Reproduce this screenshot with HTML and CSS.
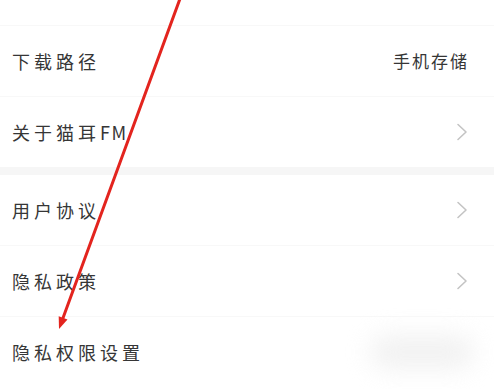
FILE: index.html
```html
<!DOCTYPE html>
<html lang="zh-CN">
<head>
<meta charset="utf-8">
<title>设置</title>
<link rel="stylesheet" href="styles.css">
</head>
<body>
<div class="page">
  <ul class="list">
    <li class="row row-top"><span class="label">清除缓存</span><span class="value">23.68MB</span></li>
    <li class="row"><span class="label">下载路径</span><span class="value">手机存储</span></li>
    <li class="row row-last"><span class="label">关于猫耳<span class="latin">FM</span></span>
      <svg class="chev" viewBox="0 0 12 18" width="12" height="18"><path d="M2 1.5 L10 9 L2 16.5" fill="none" stroke="#c4c4c4" stroke-width="1.6" stroke-linecap="round" stroke-linejoin="round"/></svg>
    </li>
  </ul>
  <div class="band"></div>
  <ul class="list">
    <li class="row"><span class="label">用户协议</span>
      <svg class="chev" viewBox="0 0 12 18" width="12" height="18"><path d="M2 1.5 L10 9 L2 16.5" fill="none" stroke="#c4c4c4" stroke-width="1.6" stroke-linecap="round" stroke-linejoin="round"/></svg>
    </li>
    <li class="row"><span class="label">隐私政策</span>
      <svg class="chev" viewBox="0 0 12 18" width="12" height="18"><path d="M2 1.5 L10 9 L2 16.5" fill="none" stroke="#c4c4c4" stroke-width="1.6" stroke-linecap="round" stroke-linejoin="round"/></svg>
    </li>
    <li class="row row-last"><span class="label">隐私权限设置</span><span class="blob"></span></li>
  </ul>
  <svg class="arrow" viewBox="0 0 494 389" width="494" height="389">
    <line x1="181" y1="-4" x2="63" y2="318" stroke="#e3241e" stroke-width="3" stroke-linecap="round"/>
    <polygon points="59,329 67.5,319.5 58.7,316.2" fill="#e3241e"/>
  </svg>
</div>
</body>
</html>
```
FILE: styles.css
```css
html, body {
  margin: 0;
  padding: 0;
  background: #ffffff;
}
.page {
  position: relative;
  width: 494px;
  height: 389px;
  overflow: hidden;
  font-family: "Noto Sans CJK SC", "Noto Sans", sans-serif;
  color: #363636;
}
.list {
  list-style: none;
  margin: 0;
  padding: 0;
}
.list:first-child {
  margin-top: -45px;
}
.row {
  display: flex;
  align-items: center;
  justify-content: space-between;
  height: 71px;
  box-sizing: border-box;
  padding: 0 26px 0 12px;
  border-bottom: 1px solid #f8f8f8;
}
.row-last {
  border-bottom: none;
  height: 70px;
}
.label {
  font-size: 18px;
  letter-spacing: 4px;
  line-height: 24px;
}
.latin {
  letter-spacing: 1.5px;
}
.value {
  font-size: 17px;
  letter-spacing: 2px;
  line-height: 24px;
  margin-right: -1px;
}
.chev {
  display: block;
}
.band {
  height: 8px;
  background: #f6f6f6;
}
.blob {
  width: 104px;
  height: 34px;
  border-radius: 17px;
  background: #ececec;
  filter: blur(12px);
  margin-right: -6px;
  opacity: 0.7;
}
.arrow {
  position: absolute;
  left: 0;
  top: 0;
  pointer-events: none;
}
```
